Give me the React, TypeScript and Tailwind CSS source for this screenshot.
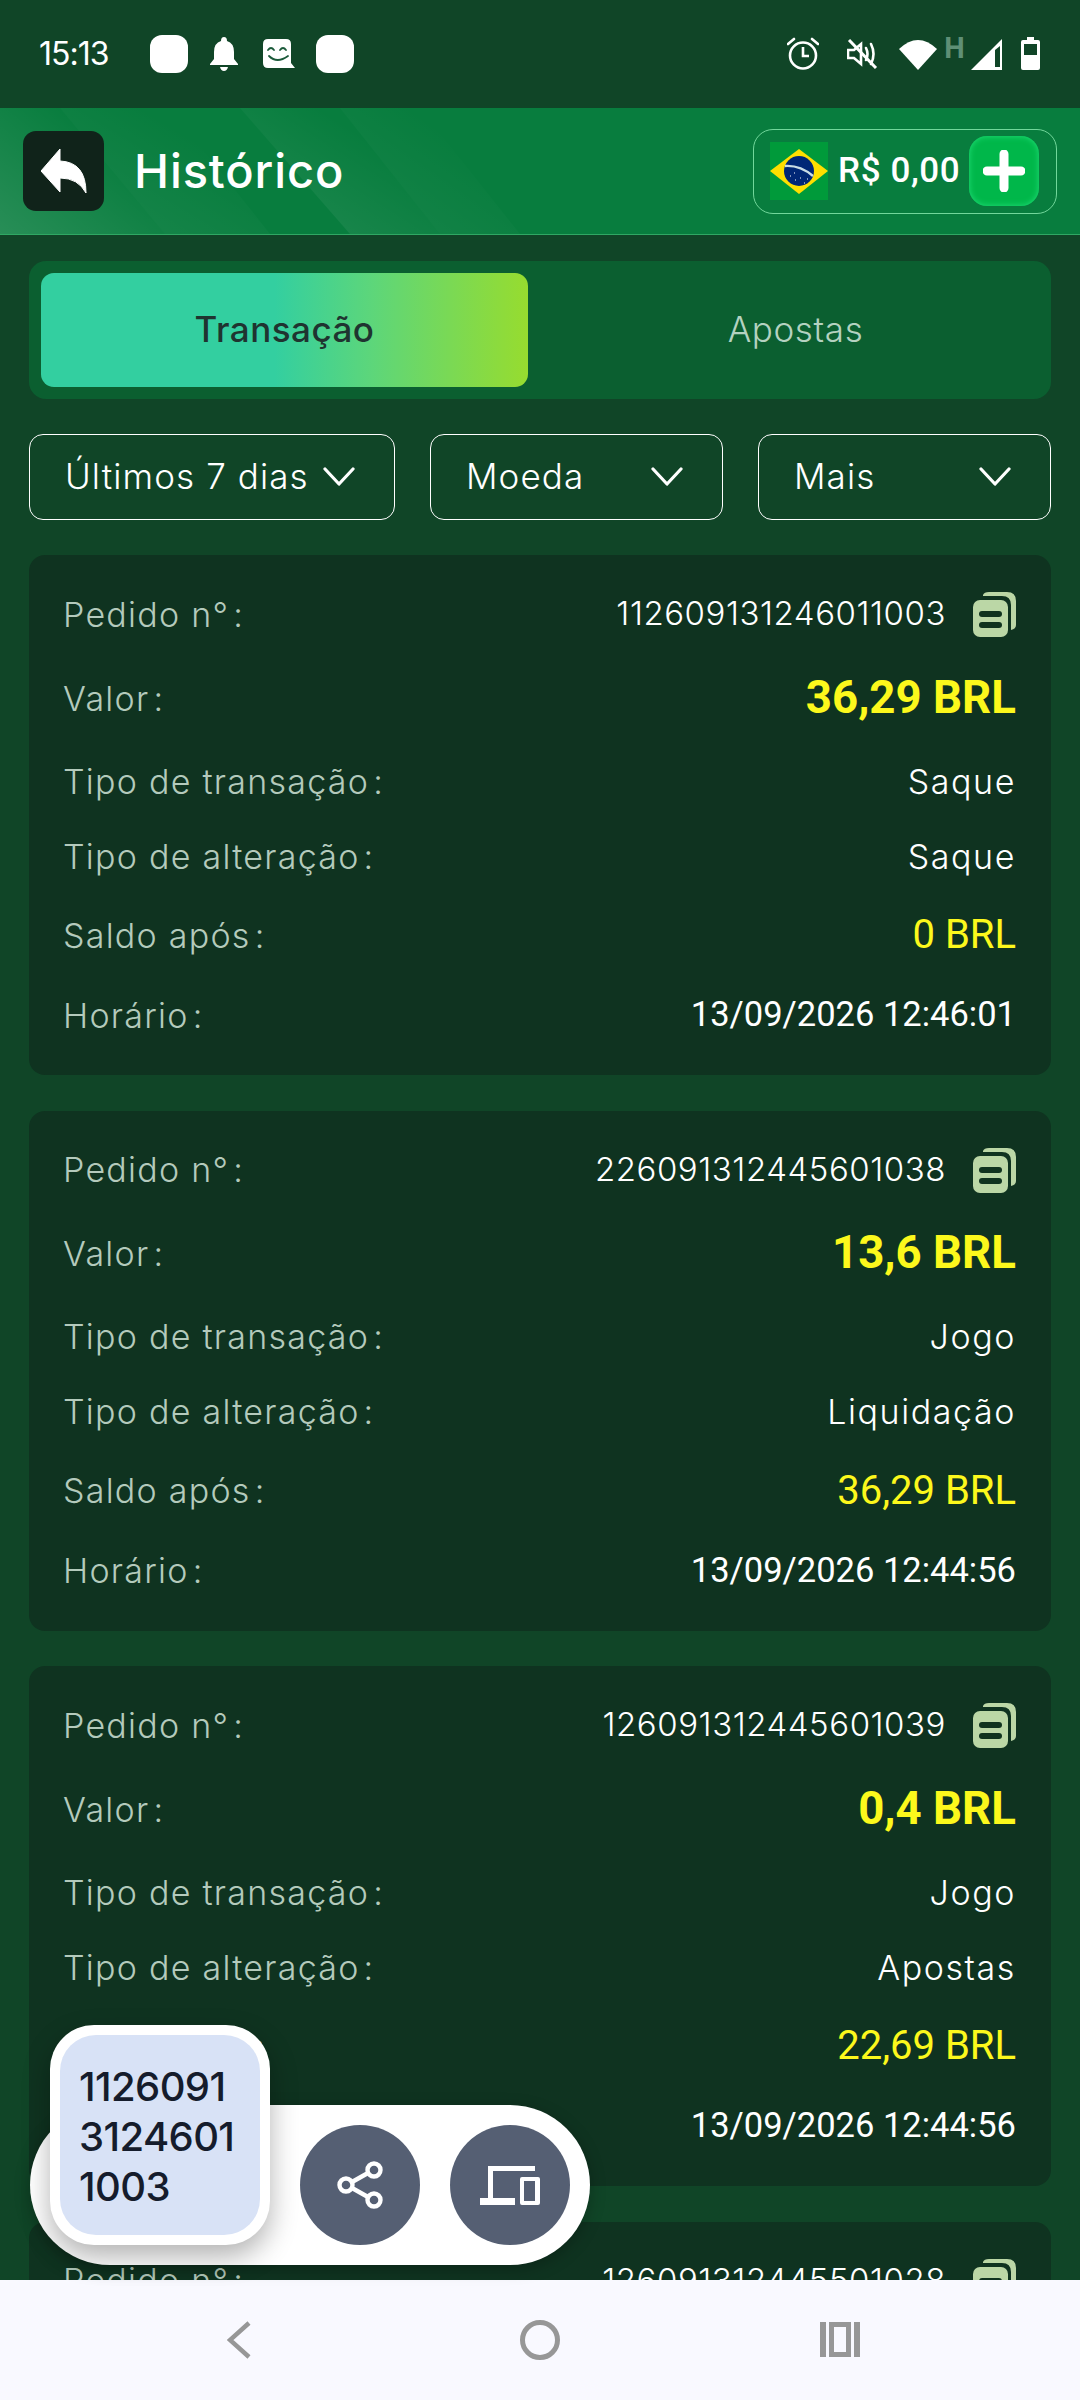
import React from "react";

type Tx = { id: string; amount: string; kind: string; change: string; balance: string; time: string };

const txs: Tx[] = [
  { id: "112609131246011003", amount: "36,29 BRL", kind: "Saque", change: "Saque", balance: "0 BRL", time: "13/09/2026 12:46:01" },
  { id: "226091312445601038", amount: "13,6 BRL", kind: "Jogo", change: "Liquidação", balance: "36,29 BRL", time: "13/09/2026 12:44:56" },
  { id: "126091312445601039", amount: "0,4 BRL", kind: "Jogo", change: "Apostas", balance: "22,69 BRL", time: "13/09/2026 12:44:56" },
  { id: "126091312445501028", amount: "5,2 BRL", kind: "Jogo", change: "Apostas", balance: "22,29 BRL", time: "13/09/2026 12:44:55" },
];

function Label({ text }: { text: string }) {
  return (
    <span className="text-[34px] font-light tracking-[1.25px] text-[#b4cabc]">
      {text}
      <span className="ml-[4px]">:</span>
    </span>
  );
}

function CopyIcon() {
  return (
    <svg width="43" height="46" viewBox="0 0 43 46" className="shrink-0">
      <path d="M10 4 Q11 1 16 1 L34 1 Q43 1 43 10 L43 34 Q43 38 38 39 L38 14 Q38 5 29 5 L10 5 Z" fill="#bbd7a6" />
      <rect x="0" y="9" width="35" height="37" rx="7" fill="#bbd7a6" />
      <rect x="6" y="20" width="23" height="6" rx="3" fill="#10331f" />
      <rect x="6" y="31" width="23" height="6" rx="3" fill="#10331f" />
    </svg>
  );
}

function Card({ tx }: { tx: Tx }) {
  return (
    <div className="h-[520px] shrink-0 rounded-[16px] bg-[#0f3320] pl-[34px] pr-[35px] pt-[19px]">
      <div className="flex h-[80px] items-center justify-between">
        <Label text="Pedido n°" />
        <div className="flex items-center gap-[27px]">
          <span className="text-[33px] font-light tracking-[0.55px] text-white">{tx.id}</span>
          <CopyIcon />
        </div>
      </div>
      <div className="flex h-[88px] items-center justify-between">
        <Label text="Valor" />
        <span className="font-[Roboto,sans-serif] text-[45.6px] font-bold text-[#fcf81c]">{tx.amount}</span>
      </div>
      <div className="flex h-[78px] items-center justify-between">
        <Label text="Tipo de transação" />
        <span className="text-[34px] font-light tracking-[1.6px] text-white">{tx.kind}</span>
      </div>
      <div className="flex h-[72px] items-center justify-between">
        <Label text="Tipo de alteração" />
        <span className="text-[34px] font-light tracking-[1.6px] text-white">{tx.change}</span>
      </div>
      <div className="flex h-[86px] items-center justify-between">
        <Label text="Saldo após" />
        <span className="font-[Roboto,sans-serif] text-[40px] text-[#fcf81c]">{tx.balance}</span>
      </div>
      <div className="flex h-[74px] items-center justify-between">
        <Label text="Horário" />
        <span className="font-[Roboto,sans-serif] text-[34.5px] text-white">{tx.time}</span>
      </div>
    </div>
  );
}

function Chevron() {
  return (
    <svg width="32" height="20" viewBox="0 0 32 20" className="shrink-0">
      <path d="M2 2 L16 17 L30 2" fill="none" stroke="#fff" strokeWidth="3.2" strokeLinecap="round" strokeLinejoin="round" />
    </svg>
  );
}

function Filter({ text, className }: { text: string; className: string }) {
  return (
    <div className={`flex h-[86px] items-center justify-between rounded-[14px] border border-white pl-[35px] pr-[39px] text-[35px] font-light tracking-[1.1px] text-white ${className}`}>
      <span className="-mt-[2px]">{text}</span>
      <Chevron />
    </div>
  );
}

function StatusBar() {
  return (
    <div className="flex h-[108px] shrink-0 items-center justify-between pl-[39px] pr-[40px] pb-[1px] text-white">
      <div className="flex items-center">
        <span className="w-[111px] text-[32px] tracking-[-1px]">15:13</span>
        <div className="h-[38px] w-[38px] rounded-[12px] bg-white" />
        <svg width="28" height="34" viewBox="0 0 28 34" className="ml-[22px]">
          <path d="M14 0 Q17 0 17 4 Q24 6 24 15 L24 22 L28 27 L28 28 L0 28 L0 27 L4 22 L4 15 Q4 6 11 4 Q11 0 14 0 Z M10 30 L18 30 Q17 34 14 34 Q11 34 10 30 Z" fill="#fff" />
        </svg>
        <svg width="32" height="30" viewBox="0 0 32 30" className="ml-[25px]">
          <path d="M5 0 L23 0 Q28 0 28 5 L28 24 L32 29 L5 29 Q0 29 0 24 L0 5 Q0 0 5 0 Z" fill="#fff" />
          <path d="M5 11 Q8 7 11 11 M17 11 Q20 7 23 11 M6 17 Q14 25 25 17" fill="none" stroke="#1b5a3a" strokeWidth="1.8" strokeLinecap="round" />
        </svg>
        <div className="ml-[21px] h-[38px] w-[38px] rounded-[12px] bg-white" />
      </div>
      <div className="flex items-center">
        <svg width="32" height="33" viewBox="0 0 32 33" fill="none" stroke="#fff" strokeWidth="2.6">
          <circle cx="16" cy="18.5" r="13" />
          <path d="M16 10 L16 19 L22 19" />
          <path d="M1 7 L7 2 M31 7 L25 2" strokeLinecap="round" />
        </svg>
        <svg width="31" height="30" viewBox="0 0 31 30" fill="none" stroke="#fff" strokeWidth="2.6" className="ml-[28px]">
          <path d="M1 11 L7 11 L14 5 L14 25 L7 19 L1 19 Z" />
          <path d="M19 9 Q22 15 19 21 M24 5 Q29 15 24 25" strokeLinecap="round" />
          <path d="M2 1 L29 29" strokeWidth="3" />
        </svg>
        <svg width="38" height="32" viewBox="0 0 38 32" className="ml-[21px]">
          <path d="M0 11 Q19 -7 38 11 L19 32 Z" fill="#fff" />
        </svg>
        <div className="flex h-[32px] w-[35px] flex-col items-center">
          <span className="-mt-[6px] font-[Roboto,sans-serif] text-[29px] font-bold leading-[32px] text-[#5f8f75]">H</span>
        </div>
        <svg width="32" height="32" viewBox="0 0 32 32" className="-ml-[1px]">
          <path d="M0 32 L31 1 L31 32 Z" fill="#fff" />
          <path d="M24 29 L24 12 L29 8 L29 29 Z" fill="#104527" />
        </svg>
        <svg width="19" height="33" viewBox="0 0 19 33" className="ml-[18px]">
          <path d="M6 0 L13 0 L13 3 L17 3 Q19 3 19 5 L19 31 Q19 33 17 33 L2 33 Q0 33 0 31 L0 5 Q0 3 2 3 L6 3 Z" fill="#fff" />
          <rect x="3" y="7" width="13" height="11" fill="#104527" />
        </svg>
      </div>
    </div>
  );
}

function Header() {
  return (
    <div className="relative flex h-[127px] shrink-0 items-center justify-between overflow-hidden border-b border-[#2fa863] bg-[#087d3e] pl-[23px] pr-[23px]">
      <svg width="620" height="126" viewBox="0 0 620 126" className="absolute left-0 top-0">
        <defs>
          <linearGradient id="glow" x1="0" y1="1" x2="1" y2="0">
            <stop offset="0" stopColor="#fff" stopOpacity="0.13" />
            <stop offset="0.7" stopColor="#fff" stopOpacity="0" />
          </linearGradient>
        </defs>
        <path d="M0 0 L60 0 L165 126 L0 126 Z" fill="url(#glow)" />
        <path d="M60 0 L170 0 L270 126 L165 126 Z" fill="url(#glow)" opacity="0.6" />
        <path d="M240 0 L340 0 L440 126 L350 126 Z" fill="url(#glow)" opacity="0.8" />
        <path d="M340 0 L420 0 L520 126 L440 126 Z" fill="url(#glow)" opacity="0.5" />
      </svg>
      <div className="relative flex items-center">
        <div className="flex h-[80px] w-[81px] items-center justify-center rounded-[13px] bg-[#10231a]">
          <svg width="46" height="46" viewBox="0 0 46 46">
            <path d="M19 1 L0 23 L19 44 L19 30 Q37 30 45 45 Q45 14 19 13 Z" fill="#fff" stroke="#fff" strokeWidth="1" strokeLinejoin="round" />
          </svg>
        </div>
        <span className="-mt-[2px] ml-[30px] text-[47px] font-medium leading-none tracking-[0.9px] text-white">Histórico</span>
      </div>
      <div className="relative flex h-[85px] w-[304px] items-center rounded-[20px] border border-[#72d79b] pl-[16px] pr-[17px]">
        <svg width="58" height="58" viewBox="0 0 58 58" className="shrink-0">
          <rect width="58" height="58" fill="#009a3a" />
          <path d="M29 7 L58 29 L29 52 L0 29 Z" fill="#fedf00" />
          <circle cx="29" cy="29" r="15" fill="#002776" />
          <path d="M15 24 Q30 23 43 34" fill="none" stroke="#c9dde6" strokeWidth="2.4" />
          <path d="M20 34h1M25 38h1M30 36h1M34 41h1M37 37h1M24 31h1" stroke="#fff" strokeWidth="1" />
        </svg>
        <span className="ml-[10px] whitespace-nowrap font-[Roboto,sans-serif] text-[35px] font-medium tracking-[0.6px] text-white">R$ 0,00</span>
        <div className="relative ml-auto flex h-[70px] w-[70px] shrink-0 items-center justify-center rounded-[18px] bg-[#00b74a] shadow-[inset_0_0_6px_#22e07a]">
          <svg width="42" height="42" viewBox="0 0 42 42">
            <path d="M21 4 L21 38 M4 21 L38 21" stroke="#fff" strokeWidth="9" strokeLinecap="round" />
          </svg>
        </div>
      </div>
    </div>
  );
}

function Tabs() {
  return (
    <div className="mt-[26px] flex h-[138px] shrink-0 rounded-[17px] bg-[#0b5f30] px-[12px] py-[12px]">
      <div className="flex w-[487px] items-center justify-center rounded-[13px] bg-[linear-gradient(90deg,#33cfa0_0%,#33cfa0_48%,#5dd67a_68%,#97dc2f_100%)] pb-[2px] text-[35px] font-medium tracking-[0.5px] text-[#1f3430]">
        Transação
      </div>
      <div className="flex flex-1 items-center justify-center pb-[2px] pl-[24px] text-[35px] font-light tracking-[0.6px] text-[#b4d2c0]">Apostas</div>
    </div>
  );
}

function FloatingBar() {
  return (
    <div className="absolute left-[30px] top-[2105px] flex h-[160px] w-[560px] items-center rounded-full bg-white pl-[270px] shadow-[0_4px_16px_rgba(0,0,0,0.25)]">
      <div className="absolute left-[20px] -top-[80px] h-[220px] w-[220px] rounded-[44px] bg-white p-[10px] shadow-[0_12px_28px_rgba(0,0,0,0.3)]">
        <div className="h-full w-full rounded-[36px] bg-[#d8e2f6] pl-[19px] pt-[27px] text-[40px] font-medium leading-[50px] tracking-[-0.6px] text-[#151c2c]">
          <div>1126091</div>
          <div>3124601</div>
          <div>1003</div>
        </div>
      </div>
      <div className="flex h-[120px] w-[120px] items-center justify-center rounded-full bg-[#555f73]">
        <svg width="46" height="48" viewBox="0 0 46 48" fill="none" stroke="#fff" strokeWidth="4.4">
          <circle cx="37" cy="9" r="6.5" />
          <circle cx="9" cy="24" r="6.5" />
          <circle cx="37" cy="39" r="6.5" />
          <path d="M15 21 L31 12 M15 27 L31 36" />
        </svg>
      </div>
      <div className="ml-[30px] flex h-[120px] w-[120px] items-center justify-center rounded-full bg-[#555f73]">
        <svg width="60" height="39" viewBox="0 0 60 39">
          <path d="M8 0 L55 0 L55 5 L13 5 L13 32 L35 32 L35 39 L0 39 L0 32 L8 32 Z" fill="#fff" />
          <path d="M40 13 Q40 11 42 11 L58 11 Q60 11 60 13 L60 37 Q60 39 58 39 L42 39 Q40 39 40 37 Z M44 15 L44 35 L55 35 L55 15 Z" fill="#fff" fillRule="evenodd" />
        </svg>
      </div>
    </div>
  );
}

function NavBar() {
  return (
    <div className="flex h-[120px] shrink-0 items-center bg-[#f9f9ff] pb-[1px] pl-[227px]">
      <svg width="24" height="38" viewBox="0 0 24 38">
        <path d="M22 2 L3 19 L22 36" fill="none" stroke="#979797" strokeWidth="4.5" />
      </svg>
      <div className="ml-[269px] h-[40px] w-[40px] rounded-full border-[5px] border-[#979797]" />
      <div className="ml-[260px] flex h-[35px] w-[40px] gap-[3px]">
        <div className="w-[6px] bg-[#979797]" />
        <div className="flex-1 border-[5px] border-[#979797]" />
        <div className="w-[6px] bg-[#979797]" />
      </div>
    </div>
  );
}

export default function App() {
  return (
    <div className="relative flex h-[2400px] w-[1080px] flex-col overflow-hidden bg-[#104527] font-[Inter,sans-serif]">
      <StatusBar />
      <Header />
      <div className="flex flex-1 flex-col overflow-hidden pl-[29px] pr-[29px]">
        <Tabs />
        <div className="mt-[35px] flex shrink-0 gap-[35px]">
          <Filter text="Últimos 7 dias" className="w-[366px]" />
          <Filter text="Moeda" className="w-[293px]" />
          <Filter text="Mais" className="w-[293px]" />
        </div>
        <div className="mt-[35px] flex flex-col gap-[35.5px]">
          {txs.map((t) => (
            <Card key={t.id} tx={t} />
          ))}
        </div>
      </div>
      <NavBar />
      <FloatingBar />
    </div>
  );
}
